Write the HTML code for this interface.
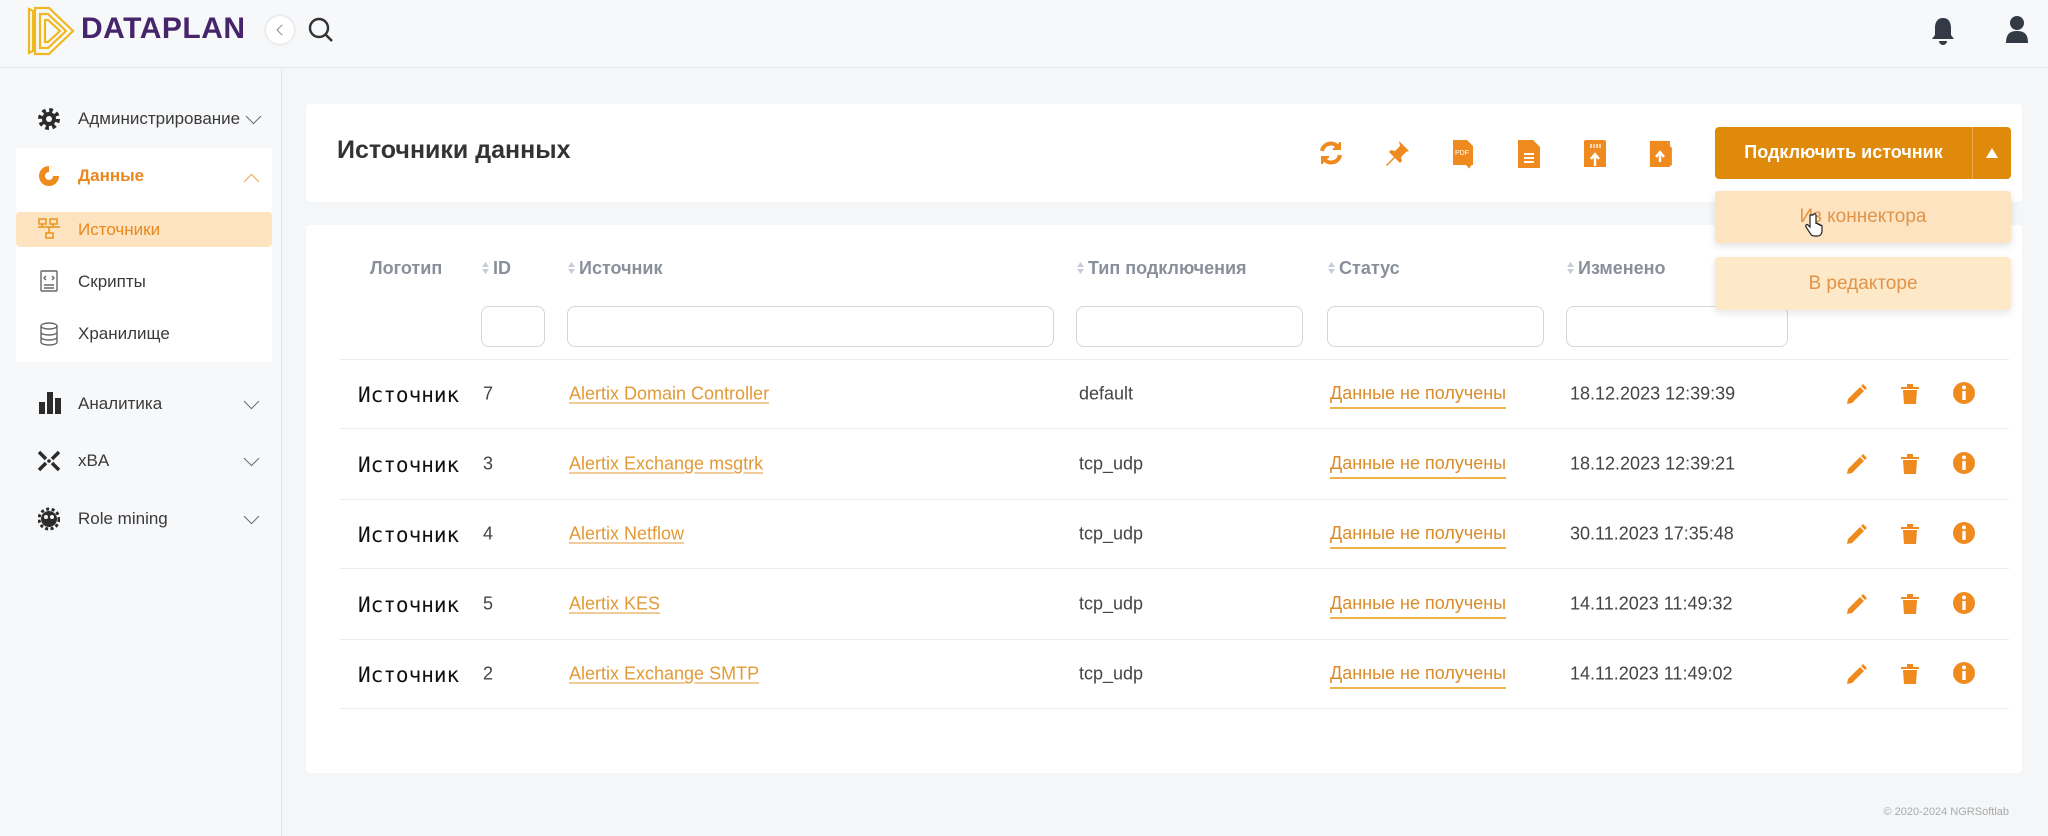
<!DOCTYPE html>
<html><head><meta charset="utf-8"><style>
*{box-sizing:border-box;margin:0;padding:0}
body{width:2048px;height:836px;background:#f4f6f8;font-family:"Liberation Sans",sans-serif;position:relative;overflow:hidden;color:#2b2b2b}
.abs{position:absolute}
.n{font-family:"Liberation Sans Narrow","Liberation Sans",sans-serif}
.hdr{left:0;top:0;width:2048px;height:68px;background:#f7f8fa;border-bottom:1px solid #e3e6ea}
.side{left:0;top:68px;width:282px;height:768px;background:#f7f8fa;border-right:1px solid #e3e6ea}
.mi{position:absolute;left:78px;font-size:17px;color:#3a3a3a}
.chev{position:absolute;left:246px;width:11px;height:11px;border-right:1.6px solid #666;border-bottom:1.6px solid #666;transform:rotate(45deg)}
.card{background:#fff;border-radius:4px}
.th{position:absolute;top:258px;font-size:18px;color:#8a8f9c;font-weight:bold}
.sort{display:inline-block;width:9px;height:14px;margin-right:3px;vertical-align:-1px}
.inp{position:absolute;top:306px;height:41px;border:1px solid #d3d6dc;border-radius:8px;background:#fff}
.line{position:absolute;left:340px;width:1669px;height:1px;background:#e9ebee}
.c{position:absolute;font-size:18px;color:#444;transform:translateY(-50%)}
.lg{font-family:"DejaVu Sans Mono","Liberation Mono",monospace;font-size:21px;color:#111;letter-spacing:0}
.lk{color:#e39a35;text-decoration:underline;text-underline-offset:3px}
.st{color:#d98c2a;border-bottom:2px solid #f0b24a;padding-bottom:3px}
</style></head><body>
<svg width="0" height="0" style="position:absolute"><defs>
<g id="so"><path d="M4.5 1l3.5 5H1z M4.5 13l3.5-5H1z" fill="#c8ccd4"/></g>
<g id="ed"><path d="M2 22l1-5 12-12 4 4-12 12z M16 4l2-2 4 4-2 2z" fill="#ef8a1e"/></g>
<g id="tr"><path d="M2 5h18v2H2zM8 2h6v3H8zM4 8h14l-1 14H5z" fill="#ef8a1e"/></g>
<g id="in"><circle cx="11" cy="11" r="11" fill="#ef8a1e"/><rect x="9.3" y="9" width="3.4" height="9" fill="#fff"/><circle cx="11" cy="5.5" r="2" fill="#fff"/></g>
</defs></svg>
<div class="abs hdr"></div>
<!-- logo -->
<svg class="abs" style="left:26px;top:6px" width="50" height="50" viewBox="0 0 50 50"><g fill="none" stroke="#f0b820" stroke-width="2.2"><path d="M3 3l4 2v40l-4 2z"/><path d="M9 2h14l24 23-24 23H9z"/><path d="M14 8h8l18 17-18 17h-8z"/><path d="M19 14h3l12 11-12 11h-3z"/></g></svg>
<div class="abs" style="left:81px;top:12px;font-size:30px;font-weight:bold;color:#46256b;letter-spacing:.5px">DATAPLAN</div>
<div class="abs" style="left:266px;top:16px;width:28px;height:28px;border-radius:50%;background:#fff;box-shadow:0 0 3px #ccc"></div>
<div class="abs" style="left:278px;top:26px;width:8px;height:8px;border-left:1.5px solid #888;border-bottom:1.5px solid #888;transform:rotate(45deg)"></div>
<svg class="abs" style="left:307px;top:16px" width="28" height="28" viewBox="0 0 28 28"><circle cx="12" cy="12" r="9" fill="none" stroke="#333" stroke-width="2.4"/><path d="M19 19l6 6" stroke="#333" stroke-width="2.6"/></svg>
<svg class="abs" style="left:1930px;top:16px" width="26" height="30" viewBox="0 0 26 30"><path d="M13 2c-6 0-8 5-8 10v7l-3 4h22l-3-4v-7c0-5-2-10-8-10z" fill="#333a45"/><path d="M9 25a4 4 0 0 0 8 0z" fill="#333a45"/></svg>
<svg class="abs" style="left:2005px;top:15px" width="24" height="30" viewBox="0 0 24 30"><circle cx="12" cy="8" r="7" fill="#333a45"/><path d="M1 28c0-8 3-12 11-12s11 4 11 12z" fill="#333a45"/></svg>

<div class="abs side"></div>
<svg class="abs" style="left:37px;top:107px" width="24" height="24" viewBox="0 0 24 24"><circle cx="12" cy="12" r="8" fill="none" stroke="#2b2b2b" stroke-width="6" stroke-dasharray="3.2 3.08"/><circle cx="12" cy="12" r="7" fill="#2b2b2b"/><circle cx="12" cy="12" r="3" fill="#f7f8fa"/></svg>
<div class="mi" style="top:109px">Администрирование</div><div class="chev" style="top:111px;left:248px"></div>
<div class="abs card" style="left:16px;top:148px;width:256px;height:214px"></div>
<svg class="abs" style="left:37px;top:164px" width="24" height="24" viewBox="0 0 24 24"><circle cx="12" cy="12" r="10" fill="#ef8a1e"/><path d="M12 12V2a10 10 0 0 1 10 10z" fill="#fff"/><circle cx="12" cy="12" r="4" fill="#fff"/></svg>
<div class="mi" style="top:166px;color:#e8881e;font-weight:bold">Данные</div>
<div class="abs" style="left:246px;top:176px;width:11px;height:11px;border-left:1.6px solid #f0a040;border-top:1.6px solid #f0a040;transform:rotate(45deg)"></div>
<div class="abs" style="left:16px;top:212px;width:256px;height:35px;background:#fde3c0;border-radius:4px"></div>
<svg class="abs" style="left:38px;top:218px" width="22" height="22" viewBox="0 0 22 22" fill="none" stroke="#e8941e" stroke-width="1.5"><rect x="1" y="1" width="7" height="5"/><rect x="12" y="1" width="7" height="5"/><rect x="8" y="15" width="7" height="5"/><path d="M0 9h22M11 9v6M4 6v3M15 6v3"/></svg>
<div class="mi" style="top:220px;color:#e8881e">Источники</div>
<svg class="abs" style="left:39px;top:270px" width="20" height="22" viewBox="0 0 20 22" fill="none" stroke="#666" stroke-width="1.4"><rect x="2" y="1" width="16" height="20" rx="1"/><path d="M7 6l-2 2 2 2M13 6l2 2-2 2M5 15h10M5 18h10"/></svg>
<div class="mi" style="top:272px">Скрипты</div>
<svg class="abs" style="left:39px;top:322px" width="20" height="24" viewBox="0 0 20 24" fill="none" stroke="#666" stroke-width="1.4"><ellipse cx="10" cy="4" rx="8" ry="3"/><path d="M2 4v16c0 4 16 4 16 0V4M2 10c0 4 16 4 16 0M2 15c0 4 16 4 16 0"/></svg>
<div class="mi" style="top:324px">Хранилище</div>
<svg class="abs" style="left:38px;top:391px" width="24" height="24" viewBox="0 0 24 24" fill="#2b2b2b"><rect x="1" y="11" width="6" height="12"/><rect x="9" y="1" width="6" height="22"/><rect x="17" y="7" width="6" height="16"/></svg>
<div class="mi" style="top:394px">Аналитика</div><div class="chev" style="top:396px"></div>
<svg class="abs" style="left:37px;top:450px" width="24" height="22" viewBox="0 0 24 22" stroke="#2b2b2b" stroke-width="3.5"><path d="M2 2l7 7M22 2l-7 7M2 20l7-7M22 20l-7-7"/><circle cx="12" cy="11" r="1.8" fill="#2b2b2b" stroke="none"/></svg>
<div class="mi" style="top:451px">xBA</div><div class="chev" style="top:453px"></div>
<svg class="abs" style="left:38px;top:507px" width="22" height="24" viewBox="0 0 22 24" fill="#2b2b2b"><circle cx="11" cy="12" r="8"/><circle cx="11" cy="12" r="10" fill="none" stroke="#2b2b2b" stroke-width="3" stroke-dasharray="3 2.5"/><circle cx="8" cy="10" r="2" fill="#f7f8fa"/><circle cx="14" cy="10" r="2" fill="#f7f8fa"/></svg>
<div class="mi" style="top:509px">Role mining</div><div class="chev" style="top:511px"></div>

<!-- top card -->
<div class="abs card" style="left:306px;top:104px;width:1716px;height:98px"></div>
<div class="abs" style="left:337px;top:136px;font-size:25px;font-weight:bold;color:#333">Источники данных</div>
<svg class="abs" style="left:1317px;top:139px" width="28" height="28" viewBox="0 0 28 28" fill="none" stroke="#ef8a1e" stroke-width="4"><path d="M5 12a9 9 0 0 1 16-4M23 16a9 9 0 0 1-16 4"/><path d="M23 3v7h-7M5 25v-7h7" fill="#ef8a1e" stroke-width="2"/></svg>
<svg class="abs" style="left:1383px;top:139px" width="28" height="28" viewBox="0 0 28 28" fill="#ef8a1e"><path d="M16 2l10 10-3 1-5 5 1 4-2 2-5-5-8 8-1-1 8-8-5-5 2-2 4 1 5-5z"/></svg>
<svg class="abs" style="left:1452px;top:139px" width="24" height="30" viewBox="0 0 24 30"><path d="M1 1h14l6 6v19H1z" fill="#ef8a1e"/><text x="3" y="16" font-size="7" fill="#fff" font-family="Liberation Sans">PDF</text><path d="M17 18v9M14 24l3 4 3-4" stroke="#ef8a1e" stroke-width="2" fill="none"/></svg>
<svg class="abs" style="left:1517px;top:139px" width="24" height="30" viewBox="0 0 24 30"><path d="M1 1h15l7 7v21H1z" fill="#ef8a1e"/><path d="M7 15h10M7 19h10M7 23h10" stroke="#fff" stroke-width="2"/></svg>
<svg class="abs" style="left:1583px;top:139px" width="24" height="30" viewBox="0 0 24 30"><path d="M1 3a2 2 0 0 1 2-2h18a2 2 0 0 1 2 2v25H1z" fill="#ef8a1e"/><path d="M8 5v4M11 5v4M14 5v4M17 5v4" stroke="#fff" stroke-width="1.3"/><path d="M12 27v-11M8 20l4-5 4 5" stroke="#fff" stroke-width="2.4" fill="none"/></svg>
<svg class="abs" style="left:1646px;top:138px" width="28" height="30" viewBox="0 0 28 30"><path d="M5 4h18v24H5z" fill="none" stroke="#ef8a1e" stroke-width="2"/><path d="M1 1h17l8 8v20H1z" fill="#ef8a1e" transform="translate(3,2) scale(.88)"/><path d="M14 24v-9M10 19l4-5 4 5" stroke="#fff" stroke-width="2.4" fill="none"/></svg>
<div class="abs n" style="left:1715px;top:127px;width:296px;height:52px;background:#e08a0c;border-radius:4px"></div>
<div class="abs" style="left:1972px;top:127px;width:1px;height:52px;background:#f0a948"></div>
<div class="abs n" style="left:1715px;top:142px;width:257px;text-align:center;color:#fff;font-size:18px;font-weight:bold">Подключить источник</div>
<svg class="abs" style="left:1985px;top:147px" width="14" height="12"><path d="M7 1l6 10H1z" fill="#fff"/></svg>

<!-- table card -->
<div class="abs card" style="left:306px;top:225px;width:1716px;height:548px"></div>
<div class="th n" style="left:370px">Логотип</div>
<div class="th n" style="left:481px"><svg class="sort"><use href="#so"/></svg>ID</div>
<div class="th n" style="left:567px"><svg class="sort"><use href="#so"/></svg>Источник</div>
<div class="th n" style="left:1076px"><svg class="sort"><use href="#so"/></svg>Тип подключения</div>
<div class="th n" style="left:1327px"><svg class="sort"><use href="#so"/></svg>Статус</div>
<div class="th n" style="left:1566px"><svg class="sort"><use href="#so"/></svg>Изменено</div>
<div class="inp" style="left:481px;width:64px"></div>
<div class="inp" style="left:567px;width:487px"></div>
<div class="inp" style="left:1076px;width:227px"></div>
<div class="inp" style="left:1327px;width:217px"></div>
<div class="inp" style="left:1566px;width:222px"></div>
<div class="line" style="top:359px"></div><div class="line" style="top:428px"></div><div class="line" style="top:499px"></div><div class="line" style="top:568px"></div><div class="line" style="top:639px"></div><div class="line" style="top:708px"></div>

<!-- rows -->
<div class="c lg" style="left:358px;top:395px">Источник</div><div class="c n" style="left:483px;top:394px">7</div><div class="c n lk" style="left:569px;top:394px">Alertix Domain Controller</div><div class="c n" style="left:1079px;top:394px">default</div><div class="c n st" style="left:1330px;top:396px">Данные не получены</div><div class="c n" style="left:1570px;top:394px">18.12.2023 12:39:39</div>
<div class="c lg" style="left:358px;top:465px">Источник</div><div class="c n" style="left:483px;top:464px">3</div><div class="c n lk" style="left:569px;top:464px">Alertix Exchange msgtrk</div><div class="c n" style="left:1079px;top:464px">tcp_udp</div><div class="c n st" style="left:1330px;top:466px">Данные не получены</div><div class="c n" style="left:1570px;top:464px">18.12.2023 12:39:21</div>
<div class="c lg" style="left:358px;top:535px">Источник</div><div class="c n" style="left:483px;top:534px">4</div><div class="c n lk" style="left:569px;top:534px">Alertix Netflow</div><div class="c n" style="left:1079px;top:534px">tcp_udp</div><div class="c n st" style="left:1330px;top:536px">Данные не получены</div><div class="c n" style="left:1570px;top:534px">30.11.2023 17:35:48</div>
<div class="c lg" style="left:358px;top:605px">Источник</div><div class="c n" style="left:483px;top:604px">5</div><div class="c n lk" style="left:569px;top:604px">Alertix KES</div><div class="c n" style="left:1079px;top:604px">tcp_udp</div><div class="c n st" style="left:1330px;top:606px">Данные не получены</div><div class="c n" style="left:1570px;top:604px">14.11.2023 11:49:32</div>
<div class="c lg" style="left:358px;top:675px">Источник</div><div class="c n" style="left:483px;top:674px">2</div><div class="c n lk" style="left:569px;top:674px">Alertix Exchange SMTP</div><div class="c n" style="left:1079px;top:674px">tcp_udp</div><div class="c n st" style="left:1330px;top:676px">Данные не получены</div><div class="c n" style="left:1570px;top:674px">14.11.2023 11:49:02</div>

<svg class="abs" style="left:1845px;top:382px" width="24" height="24"><use href="#ed"/></svg><svg class="abs" style="left:1899px;top:382px" width="24" height="24"><use href="#tr"/></svg><svg class="abs" style="left:1953px;top:382px" width="24" height="24"><use href="#in"/></svg>
<svg class="abs" style="left:1845px;top:452px" width="24" height="24"><use href="#ed"/></svg><svg class="abs" style="left:1899px;top:452px" width="24" height="24"><use href="#tr"/></svg><svg class="abs" style="left:1953px;top:452px" width="24" height="24"><use href="#in"/></svg>
<svg class="abs" style="left:1845px;top:522px" width="24" height="24"><use href="#ed"/></svg><svg class="abs" style="left:1899px;top:522px" width="24" height="24"><use href="#tr"/></svg><svg class="abs" style="left:1953px;top:522px" width="24" height="24"><use href="#in"/></svg>
<svg class="abs" style="left:1845px;top:592px" width="24" height="24"><use href="#ed"/></svg><svg class="abs" style="left:1899px;top:592px" width="24" height="24"><use href="#tr"/></svg><svg class="abs" style="left:1953px;top:592px" width="24" height="24"><use href="#in"/></svg>
<svg class="abs" style="left:1845px;top:662px" width="24" height="24"><use href="#ed"/></svg><svg class="abs" style="left:1899px;top:662px" width="24" height="24"><use href="#tr"/></svg><svg class="abs" style="left:1953px;top:662px" width="24" height="24"><use href="#in"/></svg>

<!-- dropdown -->
<div class="abs n" style="left:1715px;top:191px;width:296px;height:52px;background:#fde3bf;border-radius:4px;box-shadow:0 3px 8px rgba(0,0,0,.12);text-align:center;line-height:52px;font-size:19px;color:#e0944a">Из коннектора</div>
<div class="abs n" style="left:1715px;top:257px;width:296px;height:53px;background:#fde8c8;border-radius:4px;box-shadow:0 3px 8px rgba(0,0,0,.1);text-align:center;line-height:53px;font-size:19px;color:#e0944a">В редакторе</div>
<svg class="abs" style="left:1805px;top:213px" width="18" height="24" viewBox="0 0 18 24"><path d="M5 2v12l-2-2c-1-1-3 0-2 2l4 6c1 2 2 3 5 3h3c2 0 4-2 4-5v-5c0-1-2-1-2 0v-1c0-1-2-1-2 0v-1c0-1-2-1-2 0V2c0-1.5-3-1.5-3 0z" fill="#fff" stroke="#222" stroke-width="1.2"/></svg>

<div class="abs" style="right:39px;top:806px;font-size:11px;color:#aaa">© 2020-2024 NGRSoftlab</div>
</body></html>
